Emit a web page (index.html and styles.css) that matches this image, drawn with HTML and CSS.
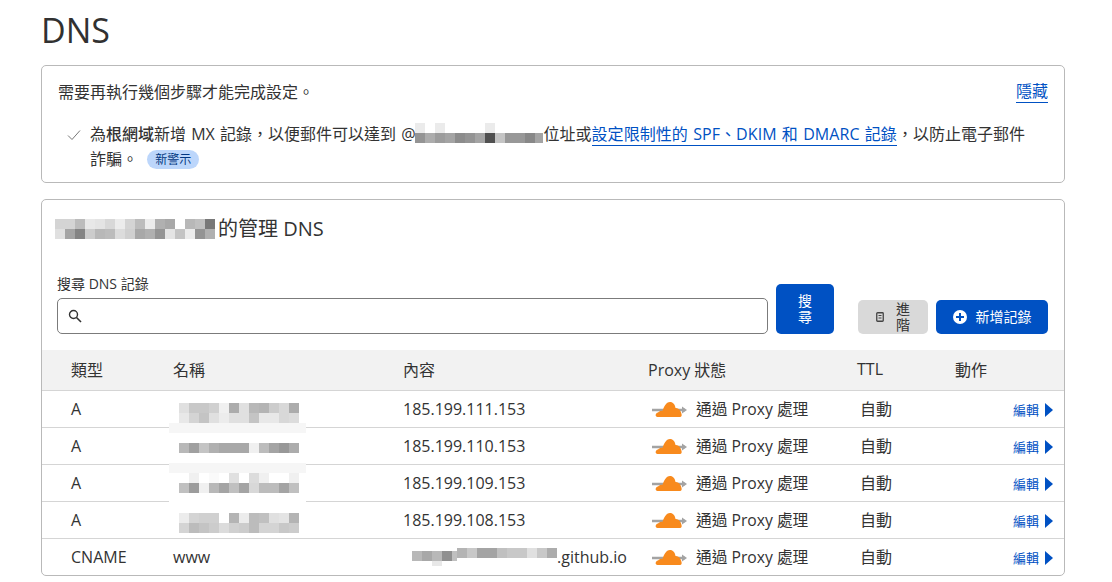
FILE: index.html
```html
<!doctype html>
<html lang="zh-Hant">
<head>
  <meta charset="UTF-8">
  <title>DNS</title>
  <link rel="stylesheet" href="styles.css">
</head>
<body>
  <h1 class="page-title">DNS</h1>

  <section class="notice">
    <div class="notice-head">
      <p>需要再執行幾個步驟才能完成設定。</p>
      <a class="link" href="#">隱藏</a>
    </div>
    <div class="notice-item">
      <svg class="check" width="14" height="12" viewBox="0 0 14 12"><path d="M1 6.5 L5 10.5 L13 1.5" fill="none" stroke="#777" stroke-width="1"/></svg>
      <p>為<b>根網域</b>新增 MX 記錄，以便郵件可以達到 @<svg class="mosaic mail" width="128" height="20" viewBox="0 0 128 20" shape-rendering="crispEdges">
        <rect x="0" y="0" width="10" height="10" fill="#ebebeb"/><rect x="20" y="0" width="10" height="10" fill="#ebebeb"/><rect x="70" y="0" width="10" height="10" fill="#ebebeb"/>
        <rect x="0" y="10" width="10" height="10" fill="#949494"/><rect x="10" y="10" width="10" height="10" fill="#acacac"/><rect x="20" y="10" width="10" height="10" fill="#9c9c9c"/><rect x="30" y="10" width="10" height="10" fill="#a4a4a4"/><rect x="40" y="10" width="10" height="10" fill="#8c8c8c"/><rect x="50" y="10" width="10" height="10" fill="#949494"/><rect x="60" y="10" width="10" height="10" fill="#a4a4a4"/><rect x="70" y="10" width="10" height="10" fill="#505050"/><rect x="80" y="10" width="10" height="10" fill="#c4c4c4"/><rect x="90" y="10" width="10" height="10" fill="#989898"/><rect x="100" y="10" width="10" height="10" fill="#989898"/><rect x="110" y="10" width="10" height="10" fill="#888"/><rect x="120" y="10" width="8" height="10" fill="#a4a4a4"/>
      </svg>位址或<a class="link wide" href="#">設定限制性的 SPF、DKIM 和 DMARC 記錄</a>，以防止電子郵件<br>詐騙。 <span class="badge">新警示</span></p>
    </div>
  </section>

  <section class="card">
    <h2 class="card-title"><svg class="mosaic" width="160" height="22" viewBox="0 0 160 22" shape-rendering="crispEdges">
      <rect x="0" y="1" width="20" height="10" fill="#d4d4d4"/><rect x="20" y="1" width="10" height="10" fill="#bcbcbc"/><rect x="30" y="1" width="10" height="10" fill="#e8e8e8"/><rect x="40" y="1" width="10" height="10" fill="#e4e4e4"/><rect x="50" y="1" width="10" height="10" fill="#d8d8d8"/><rect x="60" y="1" width="10" height="10" fill="#ececec"/><rect x="70" y="1" width="10" height="10" fill="#d4d4d4"/><rect x="80" y="1" width="10" height="10" fill="#bcbcbc"/><rect x="90" y="1" width="10" height="10" fill="#ececec"/><rect x="100" y="1" width="10" height="10" fill="#b0b0b0"/><rect x="110" y="1" width="10" height="10" fill="#a8a8a8"/><rect x="130" y="1" width="10" height="10" fill="#b8b8b8"/><rect x="140" y="1" width="10" height="10" fill="#c0c0c0"/><rect x="150" y="1" width="10" height="10" fill="#787878"/>
      <rect x="0" y="11" width="10" height="10" fill="#e0e0e0"/><rect x="10" y="11" width="10" height="10" fill="#a4a4a4"/><rect x="20" y="11" width="10" height="10" fill="#848484"/><rect x="30" y="11" width="10" height="10" fill="#ccc"/><rect x="40" y="11" width="10" height="10" fill="#b8b8b8"/><rect x="50" y="11" width="10" height="10" fill="#bcbcbc"/><rect x="60" y="11" width="10" height="10" fill="#dcdcdc"/><rect x="70" y="11" width="10" height="10" fill="#d0d0d0"/><rect x="80" y="11" width="10" height="10" fill="#a8a8a8"/><rect x="90" y="11" width="10" height="10" fill="#b0b0b0"/><rect x="100" y="11" width="10" height="10" fill="#949494"/><rect x="110" y="11" width="10" height="10" fill="#e4e4e4"/><rect x="120" y="11" width="10" height="10" fill="#c4c4c4"/><rect x="130" y="11" width="10" height="10" fill="#ececec"/><rect x="140" y="11" width="10" height="10" fill="#949494"/><rect x="150" y="11" width="10" height="10" fill="#b0b0b0"/>
    </svg>的管理 DNS</h2>

    <div class="toolbar">
      <div class="search">
        <label class="search-label" for="q">搜尋 DNS 記錄</label>
        <div class="search-box">
          <svg width="14" height="14" viewBox="0 0 14 14"><circle cx="5.5" cy="5.5" r="4" fill="none" stroke="#333" stroke-width="1.4"/><path d="M8.5 8.5 L13 13" stroke="#333" stroke-width="1.6"/></svg>
          <input id="q" type="text">
        </div>
      </div>
      <button class="btn btn-primary btn-search"><span class="stack">搜尋</span></button>
      <button class="btn btn-grey">
        <svg width="8" height="10" viewBox="0 0 8 10"><rect x="0.75" y="0.75" width="6.5" height="8.5" rx="0.8" fill="none" stroke="#444" stroke-width="1.3"/><path d="M2.5 3.5 H5.5 M2.5 6 H5.5" stroke="#444" stroke-width="1"/></svg>
        <span class="stack">進階</span>
      </button>
      <button class="btn btn-primary btn-add">
        <svg width="14" height="14" viewBox="0 0 14 14"><circle cx="7" cy="7" r="7" fill="#fff"/><path d="M7 3 V11 M3 7 H11" stroke="#0051c3" stroke-width="2"/></svg>
        新增記錄
      </button>
    </div>

    <div class="table-wrap">
      <table class="records">
        <thead>
          <tr><th>類型</th><th>名稱</th><th>內容</th><th>Proxy 狀態</th><th>TTL</th><th>動作</th></tr>
        </thead>
        <tbody>
          <tr>
            <td>A</td><td></td><td>185.199.111.153</td>
            <td><div class="proxy"><svg width="36" height="18" viewBox="0 0 36 18"><use href="#cloud"/></svg>通過 Proxy 處理</div></td>
            <td class="ttl">自動</td><td class="edit"><a href="#">編輯<i class="arrow"></i></a></td>
          </tr>
          <tr>
            <td>A</td><td></td><td>185.199.110.153</td>
            <td><div class="proxy"><svg width="36" height="18" viewBox="0 0 36 18"><use href="#cloud"/></svg>通過 Proxy 處理</div></td>
            <td class="ttl">自動</td><td class="edit"><a href="#">編輯<i class="arrow"></i></a></td>
          </tr>
          <tr>
            <td>A</td><td></td><td>185.199.109.153</td>
            <td><div class="proxy"><svg width="36" height="18" viewBox="0 0 36 18"><use href="#cloud"/></svg>通過 Proxy 處理</div></td>
            <td class="ttl">自動</td><td class="edit"><a href="#">編輯<i class="arrow"></i></a></td>
          </tr>
          <tr>
            <td>A</td><td></td><td>185.199.108.153</td>
            <td><div class="proxy"><svg width="36" height="18" viewBox="0 0 36 18"><use href="#cloud"/></svg>通過 Proxy 處理</div></td>
            <td class="ttl">自動</td><td class="edit"><a href="#">編輯<i class="arrow"></i></a></td>
          </tr>
          <tr>
            <td>CNAME</td><td>www</td>
            <td><div class="pages"><svg class="mosaic" width="145" height="18" viewBox="0 0 145 18" shape-rendering="crispEdges">
              <rect x="0" y="3" width="10" height="10" fill="#b8b8b8"/><rect x="10" y="3" width="10" height="10" fill="#a8a8a8"/><rect x="20" y="3" width="10" height="10" fill="#b8b8b8"/><rect x="30" y="3" width="10" height="10" fill="#909090"/><rect x="40" y="3" width="5" height="10" fill="#c0c0c0"/><rect x="20" y="13" width="10" height="5" fill="#e8e8e8"/>
              <rect x="45" y="0" width="10" height="10" fill="#b4b4b4"/><rect x="55" y="0" width="10" height="10" fill="#c8c8c8"/><rect x="65" y="0" width="20" height="10" fill="#a4a4a4"/><rect x="85" y="0" width="10" height="10" fill="#c0c0c0"/><rect x="95" y="0" width="20" height="10" fill="#c8c8c8"/><rect x="115" y="0" width="10" height="10" fill="#e0e0e0"/><rect x="125" y="0" width="10" height="10" fill="#c8c8c8"/><rect x="135" y="0" width="10" height="10" fill="#acacac"/>
            </svg>.github.io</div></td>
            <td><div class="proxy"><svg width="36" height="18" viewBox="0 0 36 18"><use href="#cloud"/></svg>通過 Proxy 處理</div></td>
            <td class="ttl">自動</td><td class="edit"><a href="#">編輯<i class="arrow"></i></a></td>
          </tr>
        </tbody>
      </table>

      <!-- 遮住名稱欄的馬賽克 -->
      <svg class="name-cover" width="137" height="140" viewBox="169 400 137 140" shape-rendering="crispEdges">
        <rect x="169" y="423" width="137" height="10" fill="#f6f6f6"/>
        <rect x="169" y="433" width="137" height="30" fill="#fff"/>
        <rect x="169" y="463" width="137" height="10" fill="#f6f6f6"/>
        <rect x="169" y="473" width="137" height="60" fill="#fff"/>

        <rect x="179" y="403" width="10" height="10" fill="#e0e0e0"/><rect x="189" y="403" width="10" height="10" fill="#c8c8c8"/><rect x="199" y="403" width="10" height="10" fill="#c8c8c8"/><rect x="209" y="403" width="10" height="10" fill="#d0d0d0"/><rect x="219" y="403" width="10" height="10" fill="#f0f0f0"/><rect x="229" y="403" width="10" height="10" fill="#acacac"/><rect x="239" y="403" width="10" height="10" fill="#e0e0e0"/><rect x="249" y="403" width="10" height="10" fill="#b8b8b8"/><rect x="259" y="403" width="10" height="10" fill="#b4b4b4"/><rect x="269" y="403" width="10" height="10" fill="#ccc"/><rect x="279" y="403" width="10" height="10" fill="#d8d8d8"/><rect x="289" y="403" width="10" height="10" fill="#acacac"/>
        <rect x="179" y="413" width="10" height="10" fill="#e8e8e8"/><rect x="189" y="413" width="10" height="10" fill="#d4d4d4"/><rect x="199" y="413" width="10" height="10" fill="#c4c4c4"/><rect x="209" y="413" width="10" height="10" fill="#e0e0e0"/><rect x="219" y="413" width="10" height="10" fill="#ececec"/><rect x="229" y="413" width="20" height="10" fill="#e0e0e0"/><rect x="249" y="413" width="10" height="10" fill="#c4c4c4"/><rect x="259" y="413" width="20" height="10" fill="#e8e8e8"/><rect x="279" y="413" width="10" height="10" fill="#d8d8d8"/><rect x="289" y="413" width="10" height="10" fill="#dcdcdc"/>

        <rect x="179" y="443" width="10" height="10" fill="#b8b8b8"/><rect x="189" y="443" width="10" height="10" fill="#a0a0a0"/><rect x="199" y="443" width="10" height="10" fill="#c4c4c4"/><rect x="209" y="443" width="10" height="10" fill="#b0b0b0"/><rect x="219" y="443" width="30" height="10" fill="#a8a8a8"/><rect x="249" y="443" width="10" height="10" fill="#f0f0f0"/><rect x="259" y="443" width="10" height="10" fill="#bcbcbc"/><rect x="269" y="443" width="10" height="10" fill="#a4a4a4"/><rect x="279" y="443" width="10" height="10" fill="#989898"/><rect x="289" y="443" width="10" height="10" fill="#acacac"/>

        <rect x="189" y="473" width="10" height="10" fill="#f0f0f0"/><rect x="209" y="473" width="10" height="10" fill="#fafafa"/><rect x="229" y="473" width="10" height="10" fill="#e0e0e0"/><rect x="249" y="473" width="10" height="10" fill="#dcdcdc"/><rect x="259" y="473" width="10" height="10" fill="#f0f0f0"/><rect x="289" y="473" width="10" height="10" fill="#f0f0f0"/>
        <rect x="179" y="483" width="10" height="10" fill="#c0c0c0"/><rect x="189" y="483" width="10" height="10" fill="#9c9c9c"/><rect x="199" y="483" width="10" height="10" fill="#f0f0f0"/><rect x="209" y="483" width="10" height="10" fill="#b8b8b8"/><rect x="219" y="483" width="10" height="10" fill="#a4a4a4"/><rect x="229" y="483" width="10" height="10" fill="#c0c0c0"/><rect x="239" y="483" width="10" height="10" fill="#a4a4a4"/><rect x="249" y="483" width="10" height="10" fill="#d8d8d8"/><rect x="259" y="483" width="20" height="10" fill="#bcbcbc"/><rect x="279" y="483" width="10" height="10" fill="#a4a4a4"/><rect x="289" y="483" width="10" height="10" fill="#c0c0c0"/>

        <rect x="179" y="513" width="10" height="10" fill="#ececec"/><rect x="189" y="513" width="10" height="10" fill="#d4d4d4"/><rect x="199" y="513" width="20" height="10" fill="#d0d0d0"/><rect x="229" y="513" width="10" height="10" fill="#b4b4b4"/><rect x="239" y="513" width="10" height="10" fill="#ececec"/><rect x="249" y="513" width="10" height="10" fill="#bcbcbc"/><rect x="259" y="513" width="10" height="10" fill="#c0c0c0"/><rect x="269" y="513" width="10" height="10" fill="#e0e0e0"/><rect x="279" y="513" width="10" height="10" fill="#e4e4e4"/><rect x="289" y="513" width="10" height="10" fill="#b4b4b4"/>
        <rect x="179" y="523" width="10" height="10" fill="#d4d4d4"/><rect x="189" y="523" width="10" height="10" fill="#bcbcbc"/><rect x="199" y="523" width="10" height="10" fill="#c4c4c4"/><rect x="209" y="523" width="10" height="10" fill="#ccc"/><rect x="219" y="523" width="10" height="10" fill="#dcdcdc"/><rect x="229" y="523" width="10" height="10" fill="#d0d0d0"/><rect x="239" y="523" width="10" height="10" fill="#ccc"/><rect x="249" y="523" width="10" height="10" fill="#bcbcbc"/><rect x="259" y="523" width="20" height="10" fill="#d4d4d4"/><rect x="279" y="523" width="10" height="10" fill="#c8c8c8"/><rect x="289" y="523" width="10" height="10" fill="#ccc"/>
      </svg>
    </div>
  </section>

  <svg class="defs" width="0" height="0">
    <symbol id="cloud" viewBox="0 0 36 18">
      <path d="M0 9 H33" stroke="#a3a3a3" stroke-width="2.5"/>
      <path d="M30 5.5 L35 9 L30 12.5 Z" fill="#a3a3a3"/>
      <path d="M5.5 16 C3 16 3 12 6 11.5 C7.5 9.8 9 9.5 10.5 9.8 C12 6 14 1 18 1 C21 1 23 3.5 23.5 7 C26 6.5 29 9.5 29.5 13 C30 14.5 29.5 16 28 16 Z" fill="#f88a1d"/>
    </symbol>
  </svg>
</body>
</html>
```

FILE: styles.css
```css
* { box-sizing: border-box; }

body {
  margin: 0;
  padding: 0 47px 0 41px;
  background: #fff;
  color: #333;
  font-family: "Open Sans", "Noto Sans CJK TC", sans-serif;
  font-size: 16px;
  overflow: hidden;
}

p { margin: 0; }

.page-title {
  margin: 8px 0 13px;
  font-size: 34px;
  line-height: 44px;
  font-weight: 500;
  color: #313131;
}

.link {
  color: #0051c3;
  text-decoration: none;
  border-bottom: 1px solid #0051c3;
}
.link.wide { letter-spacing: 0.07px; }

.mosaic { display: inline-block; vertical-align: bottom; }

/* 提示區塊 */
.notice {
  height: 118px;
  padding: 14px 16px 0;
  border: 1px solid #b9b9b9;
  border-radius: 5px;
  margin-bottom: 16px;
}
.notice-head {
  display: flex;
  justify-content: space-between;
  line-height: 24px;
}
.notice-head .link { line-height: 22px; height: 23px; }
.notice-item {
  display: flex;
  align-items: flex-start;
  gap: 9px;
  margin-top: 18px;
  padding: 0 16px 0 9px;
  line-height: 25px;
  word-spacing: 1px;
}
.notice-item b { font-weight: 500; }
.check { flex: none; margin-top: 7px; }
.mail { vertical-align: -3px; }
.badge {
  display: inline-block;
  margin-left: 4px;
  padding: 0 8px;
  height: 19px;
  line-height: 19px;
  border-radius: 10px;
  background: #bcd6fb;
  color: #003681;
  font-size: 12px;
  vertical-align: 1px;
}

/* 記錄卡片 */
.card {
  height: 377px;
  border: 1px solid #b9b9b9;
  border-radius: 5px;
}
.card-title {
  margin: 0;
  padding: 16px 13px 0;
  font-size: 20px;
  line-height: 26px;
  font-weight: 400;
  display: flex;
  align-items: center;
  gap: 3px;
}
.toolbar {
  display: flex;
  align-items: flex-end;
  margin-top: 32px;
  padding: 0 16px 16px 15px;
}
.search { flex: 1; }
.search-label { display: block; font-size: 14px; line-height: 20px; margin-bottom: 4px; }
.search-box {
  display: flex;
  align-items: center;
  gap: 8px;
  height: 36px;
  padding: 0 10px;
  border: 1px solid #7b7b7b;
  border-radius: 5px;
}
.search-box input { flex: 1; border: 0; outline: 0; background: none; }

.btn {
  display: flex;
  align-items: center;
  justify-content: center;
  border: 0;
  border-radius: 5px;
  font-family: inherit;
  font-size: 14px;
  line-height: 16px;
  padding: 0;
}
.btn-primary { background: #0051c3; color: #fff; }
.btn-grey { width: 70px; height: 34px; margin-left: 24px; gap: 12px; background: #d9d9d9; color: #333; }
.btn-search { width: 58px; height: 50px; margin-left: 8px; }
.btn-add { width: 112px; height: 34px; margin-left: 8px; gap: 9px; }
.stack { display: block; width: 14px; white-space: normal; }

/* 表格 */
.table-wrap { position: relative; }
.records {
  width: 100%;
  table-layout: fixed;
  border-collapse: separate;
  border-spacing: 0;
}
.records th {
  height: 41px;
  padding: 0 0 2px;
  background: #f2f2f2;
  border-bottom: 1px solid #d5d5d5;
  font-size: 16px;
  font-weight: 400;
  text-align: left;
}
.records td {
  height: 37px;
  padding: 0;
  border-bottom: 1px solid #d5d5d5;
  font-size: 16px;
  white-space: nowrap;
}
.records tr:last-child td { border-bottom: 0; height: 36px; }
.records th:nth-child(1), .records td:nth-child(1) { width: 131px; padding-left: 29px; }
.records th:nth-child(2) { width: 230px; }
.records th:nth-child(3) { width: 245px; }
.records th:nth-child(4) { width: 209px; }
.records th:nth-child(5) { width: 98px; }
.records td.ttl { padding: 0 0 2px 3px; }
.proxy { display: flex; align-items: center; gap: 8px; padding: 0 0 2px 4px; font-size: 15.7px; }
.proxy svg { margin-top: 4px; }
.pages { display: flex; align-items: center; padding-left: 9px; }
.edit { text-align: right; padding-right: 11px !important; }
.edit a { color: #0051c3; text-decoration: none; font-size: 13px; }
.arrow {
  display: inline-block;
  margin-left: 6px;
  border-left: 8px solid #0051c3;
  border-top: 7px solid transparent;
  border-bottom: 7px solid transparent;
  vertical-align: -2px;
}
.name-cover { position: absolute; left: 127px; top: 50px; }
.defs { position: absolute; }
```
